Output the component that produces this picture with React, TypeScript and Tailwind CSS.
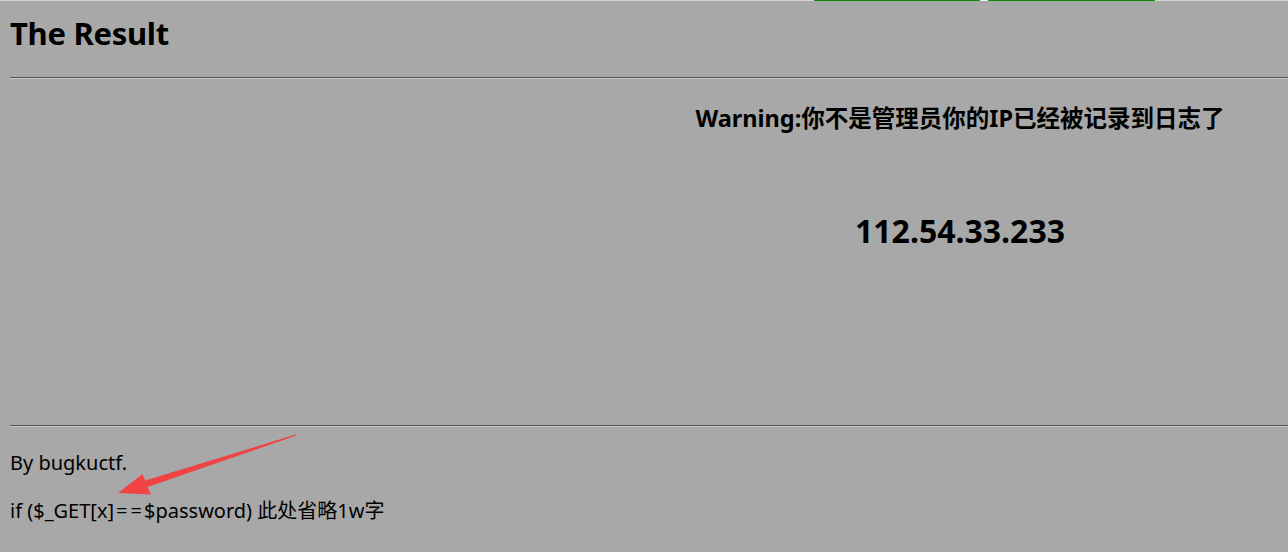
import React from "react";

export default function App() {
  const font = { fontFamily: '"Noto Sans", "Noto Sans CJK SC", sans-serif' };
  return (
    <div className="relative w-[1288px] h-[552px] overflow-hidden bg-[#a8a8a8] text-black" style={font}>
      <div className="flex h-[1px] bg-[#d4d4d4]">
        <div className="w-[814px]" />
        <div className="w-[166px] bg-[#0a8a0a]" />
        <div className="w-[8px] bg-[#f0f0f0]" />
        <div className="w-[167px] bg-[#0a8a0a]" />
      </div>
      <div className="pl-[10px]">
        <h1 className="pt-[12px] text-[31px] font-bold leading-[40px] tracking-[-0.3px]">The Result</h1>
        <div className="mt-[24px] border-t border-t-[#555555] border-b border-b-[#c8c8c8]" />
        <div className="flex h-[346px]">
          <div className="flex-1" />
          <div className="w-[540px] mr-[58px] flex flex-col items-center">
            <div className="mt-[24px] text-[23.5px] font-bold leading-[30px] whitespace-nowrap">
              Warning:你不是管理员你的IP已经被记录到日志了
            </div>
            <div className="mt-[78px] text-[32px] font-bold leading-[40px]">112.54.33.233</div>
          </div>
        </div>
        <div className="border-t border-t-[#555555] border-b border-b-[#c8c8c8]" />
        <p className="mt-[22px] text-[20px] leading-[28px]">By bugkuctf.</p>
        <p className="mt-[20px] text-[20px] leading-[28px]">
          if ($_GET[x]<span className="ml-[2px] mr-[3px]">=</span>
          <span className="mr-[2px]">=</span>$password) 此处省略1w字
        </p>
      </div>
      <svg className="absolute left-0 top-0" width="1288" height="552" viewBox="0 0 1288 552">
        <polygon
          points="118,493 142.5,474 145.2,480.6 295.8,434.5 296.2,435.5 147.6,487 151,494.5"
          fill="#f04444"
        />
      </svg>
    </div>
  );
}
